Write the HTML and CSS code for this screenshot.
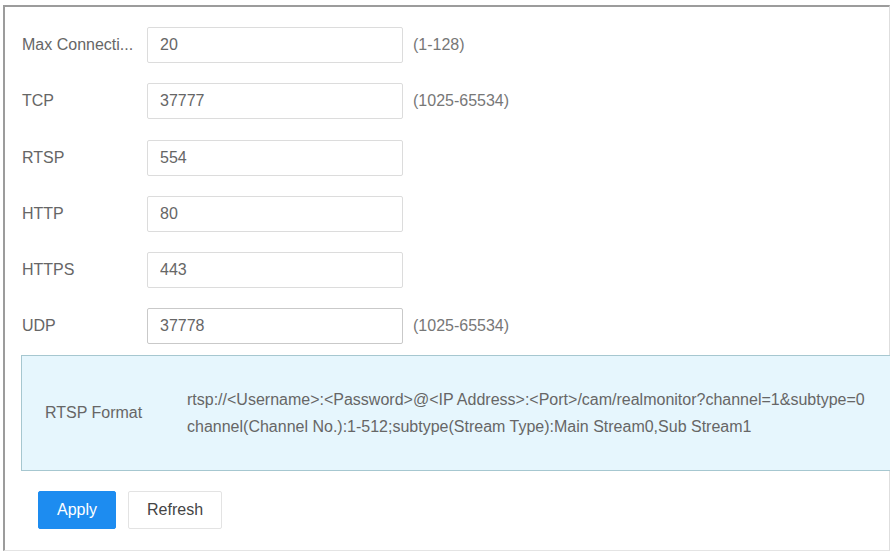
FILE: index.html
```html
<!DOCTYPE html>
<html lang="en">
<head>
    <meta charset="UTF-8">
    <meta name="viewport" content="width=device-width, initial-scale=1.0">
    <title>Port</title>
    <link rel="stylesheet" href="styles.css">
</head>
<body>
    <div class="panel">
        <!-- port fields -->
        <div class="form-row">
            <label class="form-label" title="Max Connection">Max Connecti...</label>
            <input type="text" class="form-input" value="20">
            <span class="form-hint">(1-128)</span>
        </div>
        <div class="form-row">
            <label class="form-label">TCP</label>
            <input type="text" class="form-input" value="37777">
            <span class="form-hint">(1025-65534)</span>
        </div>
        <div class="form-row">
            <label class="form-label">RTSP</label>
            <input type="text" class="form-input" value="554">
        </div>
        <div class="form-row">
            <label class="form-label">HTTP</label>
            <input type="text" class="form-input" value="80">
        </div>
        <div class="form-row">
            <label class="form-label">HTTPS</label>
            <input type="text" class="form-input" value="443">
        </div>
        <div class="form-row form-row-last">
            <label class="form-label">UDP</label>
            <input type="text" class="form-input active" value="37778">
            <span class="form-hint">(1025-65534)</span>
        </div>

        <!-- rtsp tip -->
        <div class="tip-box">
            <div class="tip-title">RTSP Format</div>
            <div class="tip-text">
                <p>rtsp://&lt;Username&gt;:&lt;Password&gt;@&lt;IP Address&gt;:&lt;Port&gt;/cam/realmonitor?channel=1&amp;subtype=0</p>
                <p>channel(Channel No.):1-512;subtype(Stream Type):Main Stream0,Sub Stream1</p>
            </div>
        </div>

        <div class="btn-bar">
            <button class="btn btn-primary">Apply</button>
            <button class="btn">Refresh</button>
        </div>
    </div>
</body>
</html>
```

FILE: styles.css
```css
* {
    margin: 0;
    padding: 0;
    box-sizing: border-box;
    font-family: 'Liberation Sans', Arial, sans-serif;
}

body {
    background-color: #fff;
    font-size: 16px;
    color: #666;
}

.panel {
    margin: 5px 2px 2px 3px;
    width: 887px;
    height: 546px;
    border-top: 2px solid #9c9c9c;
    border-left: 2px solid #9c9c9c;
    border-right: 1px solid #dedede;
    border-bottom: 1px solid #e4e4e4;
    padding: 20px 0 0 16px;
}

.form-row {
    display: flex;
    align-items: center;
    height: 36px;
    margin-bottom: 20.3px;
}

.form-row-last {
    margin-bottom: 11px;
}

.form-label {
    flex: none;
    width: 126px;
    padding-left: 1px;
    white-space: nowrap;
    overflow: hidden;
    color: #666;
}

.form-input {
    width: 256px;
    height: 36px;
    padding: 0 12px;
    border: 1px solid #dcdcdc;
    border-radius: 2px;
    font-size: 16px;
    color: #666;
    outline: none;
}

.form-input.active {
    border-color: #c9c9c9;
}

.form-hint {
    margin-left: 10px;
    color: #777;
}

.tip-box {
    display: flex;
    align-items: center;
    height: 116px;
    margin-right: -1px;
    background-color: #e6f6fd;
    border: 1px solid #a6c7d0;
    border-right: none;
    color: #666;
}

.tip-title {
    width: 165px;
    padding-left: 23px;
}

.tip-text p {
    line-height: 27px;
    white-space: nowrap;
}

.btn-bar {
    display: flex;
    gap: 12px;
    margin-top: 20px;
    padding-left: 17px;
}

.btn {
    height: 38px;
    padding: 0 18px;
    background-color: #fff;
    border: 1px solid #e3e3e3;
    border-radius: 2px;
    font-size: 16px;
    color: #444;
    cursor: pointer;
}

.btn-primary {
    width: 78px;
    padding: 0;
    background-color: #1d8cf0;
    border-color: #1d8cf0;
    color: #fff;
}
```
